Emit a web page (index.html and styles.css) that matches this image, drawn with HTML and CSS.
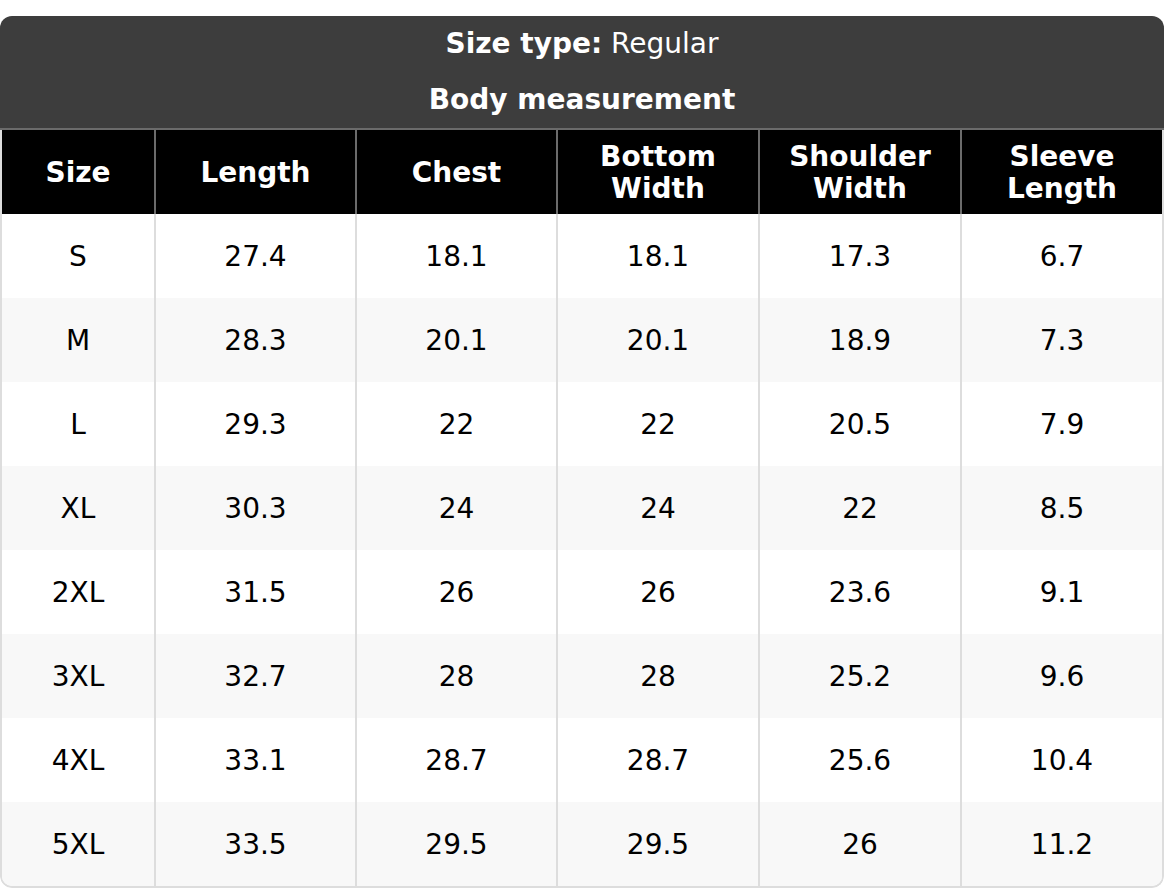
FILE: index.html
```html
<!DOCTYPE html>
<html>
<head>
<meta charset="utf-8">
<link rel="stylesheet" href="styles.css">
</head>
<body>
<div class="card">
  <div class="title">
    <div class="title-line"><b>Size type:</b> Regular</div>
    <div class="title-line"><b>Body measurement</b></div>
  </div>
  <div class="table-wrap">
    <table class="sizes">
      <colgroup>
        <col class="c-size"><col class="c-a"><col class="c-a"><col class="c-b"><col class="c-b"><col class="c-b">
      </colgroup>
      <thead>
        <tr><th>Size</th><th>Length</th><th>Chest</th><th>Bottom<br>Width</th><th>Shoulder<br>Width</th><th>Sleeve<br>Length</th></tr>
      </thead>
      <tbody>
        <tr><td>S</td><td>27.4</td><td>18.1</td><td>18.1</td><td>17.3</td><td>6.7</td></tr>
        <tr><td>M</td><td>28.3</td><td>20.1</td><td>20.1</td><td>18.9</td><td>7.3</td></tr>
        <tr><td>L</td><td>29.3</td><td>22</td><td>22</td><td>20.5</td><td>7.9</td></tr>
        <tr><td>XL</td><td>30.3</td><td>24</td><td>24</td><td>22</td><td>8.5</td></tr>
        <tr><td>2XL</td><td>31.5</td><td>26</td><td>26</td><td>23.6</td><td>9.1</td></tr>
        <tr><td>3XL</td><td>32.7</td><td>28</td><td>28</td><td>25.2</td><td>9.6</td></tr>
        <tr><td>4XL</td><td>33.1</td><td>28.7</td><td>28.7</td><td>25.6</td><td>10.4</td></tr>
        <tr><td>5XL</td><td>33.5</td><td>29.5</td><td>29.5</td><td>26</td><td>11.2</td></tr>
      </tbody>
    </table>
  </div>
</div>
</body>
</html>
```
FILE: styles.css
```css
html, body {
  margin: 0;
  padding: 0;
  background: #ffffff;
}
body {
  padding-top: 16px;
  font-family: "DejaVu Sans", "Liberation Sans", sans-serif;
  font-size: 28px;
  color: #000000;
}
.card {
  width: 1164px;
  border-radius: 12px;
  overflow: hidden;
  box-sizing: border-box;
}
.title {
  background: #3d3d3d;
  color: #ffffff;
  text-align: center;
  padding: 12px 0 12px;
  display: flex;
  flex-direction: column;
  gap: 24px;
  border-bottom: 2px solid #6b6b6b;
}
.title-line {
  line-height: 32px;
  font-weight: normal;
}
.title-line b {
  font-weight: bold;
}
.table-wrap {
  border: 2px solid #dddddd;
  border-top: none;
  border-radius: 0 0 12px 12px;
  overflow: hidden;
}
.sizes {
  width: 1160px;
  table-layout: fixed;
  border-collapse: separate;
  border-spacing: 0;
}
.c-size { width: 152px; }
.c-a { width: 201px; }
.c-b { width: 202px; }
.sizes th, .sizes td {
  padding: 2px 0 0;
  height: 82px;
  text-align: center;
  vertical-align: middle;
  line-height: 32px;
}
.sizes th {
  background: #000000;
  color: #ffffff;
  font-weight: bold;
}
.sizes th + th {
  border-left: 2px solid #6b6b6b;
}
.sizes td {
  font-weight: normal;
}
.sizes td + td {
  border-left: 2px solid #dddddd;
}
.sizes tbody tr:nth-child(even) td {
  background: #f8f8f8;
}
```
